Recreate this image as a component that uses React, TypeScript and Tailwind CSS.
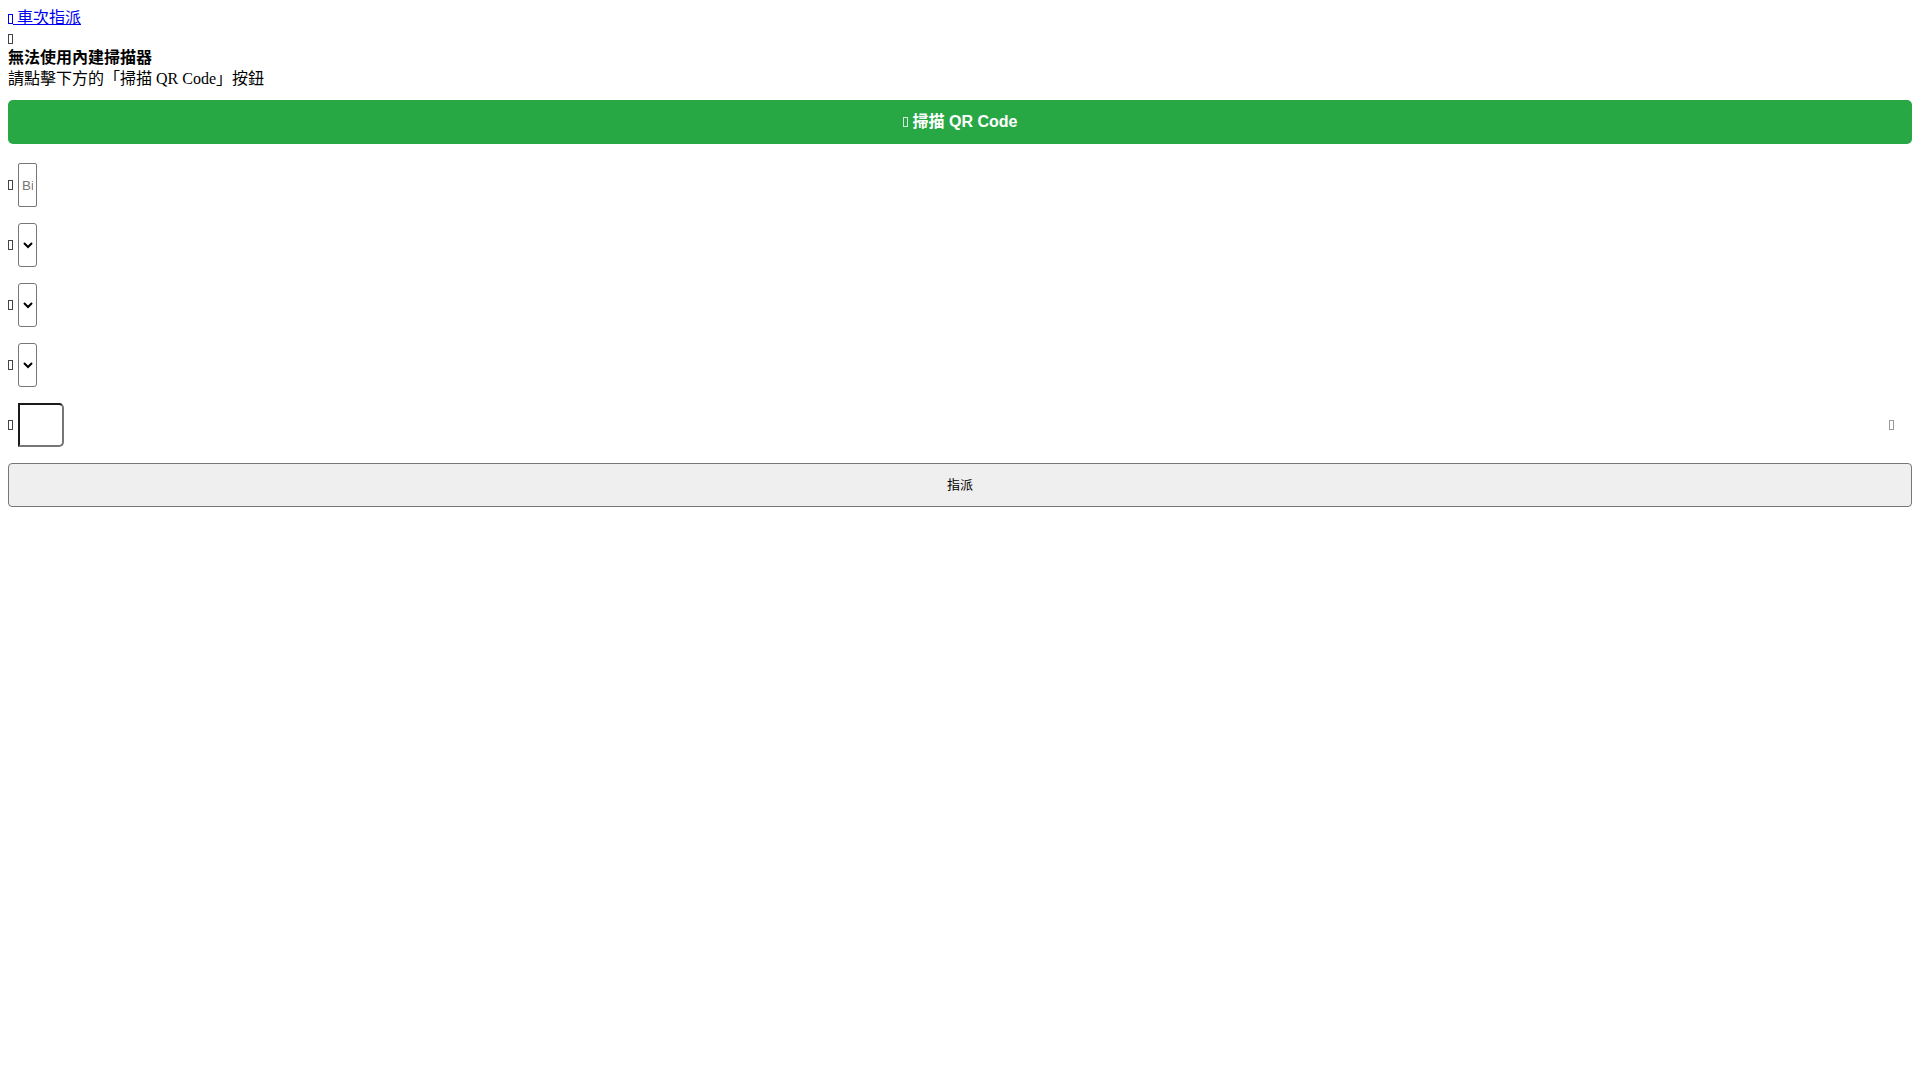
import React from "react";

// missing icon-font glyph, drawn as the empty box the browser shows
function Tofu({ className = "" }: { className?: string }) {
  return <span className={`inline-block h-[10px] w-[5px] border border-current align-[-1px] ${className}`} />;
}

const rows = ["input", "select", "select", "select"] as const;

export default function App() {
  return (
    <div className="min-h-screen bg-white px-2 pt-2 text-[16px] text-black [font-family:'Liberation_Serif','Noto_Sans_CJK_TC',serif]">
      <div className="flex h-[20px] items-center">
        <a href="#" className="text-[#0000ee]">
          <Tofu />
          <span className="underline"> 車次指派</span>
        </a>
      </div>
      <div className="flex h-[21px] items-center">
        <Tofu className="text-[#444]" />
      </div>
      <h4 className="flex h-[18px] items-center font-bold">無法使用內建掃描器</h4>
      <p className="flex h-[22px] items-center pt-px">請點擊下方的「掃描 QR Code」按鈕</p>

      <button className="mt-[11px] flex h-[44px] w-full items-center justify-center gap-[5px] rounded-[5px] bg-[#28a745] text-[16px] font-semibold text-white [font-family:'Liberation_Sans','Noto_Sans_CJK_TC',sans-serif]">
        <Tofu className="opacity-80" />
        <span>掃描 QR Code</span>
      </button>

      <div className="mt-[19px] flex flex-col gap-4">
        {rows.map((kind, i) => (
          <div key={i} className="flex h-[44px] items-center gap-[5px]">
            <Tofu className="text-[#444]" />
            {kind === "input" ? (
              <input
                placeholder="Bin"
                className="h-[44px] w-[19px] rounded-[2px] border border-[#767676] px-[3px] text-[13.33px] placeholder:text-[#757575] [font-family:'Liberation_Sans',sans-serif]"
              />
            ) : (
              <select className="h-[44px] w-[19px] rounded-[3px] border border-[#767676] bg-white text-[13px] text-black [font-family:'Liberation_Sans',sans-serif]">
                <option></option>
              </select>
            )}
          </div>
        ))}
        <div className="flex h-[44px] items-center gap-[5px]">
          <Tofu className="text-[#444]" />
          <input className="h-[44px] w-[46px] rounded-r-[5px] border-2 border-t-[#1a1a1a] border-r-[#767676] border-b-[#767676] border-l-[#1a1a1a] bg-white" />
          <Tofu className="ml-auto mr-[18px] h-[8px] w-[4px] text-[#9a9a9a]" />
        </div>
        <button className="h-[44px] w-full rounded-[4px] border border-[#767676] bg-[#efefef] text-[13px] text-black [font-family:'Liberation_Sans','Noto_Sans_CJK_TC',sans-serif]">
          指派
        </button>
      </div>
    </div>
  );
}
